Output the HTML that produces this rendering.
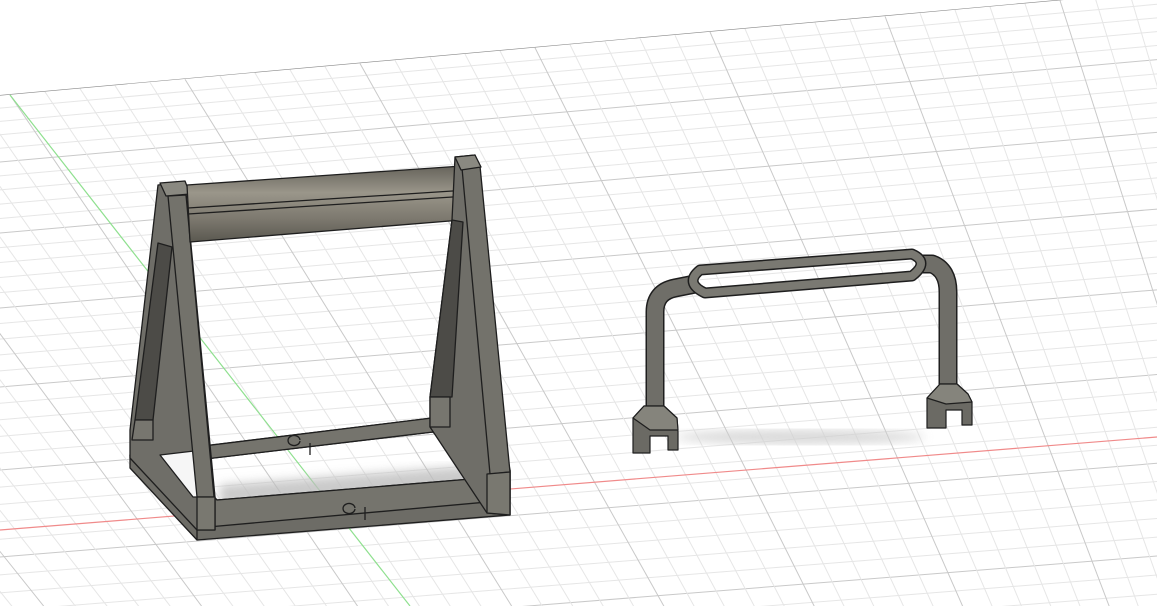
<!DOCTYPE html>
<html><head><meta charset="utf-8"><style>
html,body{margin:0;padding:0;background:#fff;width:1157px;height:606px;overflow:hidden}
svg{display:block;position:absolute;left:0;top:0}
</style></head><body>
<svg id="s" width="1157" height="606" viewBox="0 0 1157 606" xmlns="http://www.w3.org/2000/svg">
<defs>
<clipPath id="gc"><polygon points="0,95 1157,-9 1157,606 0,606"/></clipPath>
<linearGradient id="rod" x1="0" y1="0" x2="0" y2="1">
<stop offset="0" stop-color="#66635b"/><stop offset="0.35" stop-color="#9a968a"/><stop offset="0.7" stop-color="#7c786e"/><stop offset="1" stop-color="#5a5850"/></linearGradient>
<filter id="bl"><feGaussianBlur stdDeviation="5"/></filter>
</defs>
<g id="grid" clip-path="url(#gc)"></g>
<g clip-path="url(#gc)">
<line x1="10" y1="95" x2="410" y2="606" stroke="#8fe08f" stroke-width="1.2"/>
<line x1="0" y1="530" x2="1157" y2="437" stroke="#f08a8a" stroke-width="1.2"/>
<line x1="0" y1="95" x2="1157" y2="-9" stroke="#888" stroke-width="1.2"/>
</g>
<!-- shadows -->
<polygon points="220,485 480,465 482,492 220,505" fill="#bdbdbd" filter="url(#bl)" opacity="0.8"/>
<ellipse cx="800" cy="437" rx="125" ry="7" fill="#cfcfcf" filter="url(#bl)" opacity="0.8"/>

<g stroke="#1e1e1e" stroke-width="1.3" stroke-linejoin="round">
<!-- base -->
<path fill-rule="evenodd" d="M130,455 L432,418 L510,470 L510,515 L197,540 L130,468 Z M180,462 L433,432 L483,478 L217,500 Z" fill="#6d6c66"/>
<path fill-rule="evenodd" d="M130,455 L432,418 L510,470 L510,500 L197,528 Z M180,462 L433,432 L483,478 L217,500 Z" fill="#75746d"/>
<line x1="197" y1="528" x2="197" y2="540"/>
<line x1="310" y1="443" x2="310" y2="455"/>
<line x1="365" y1="507" x2="365" y2="520"/>
<path d="M300,440 a6,5 0 1 0 0,1" fill="none"/>
<path d="M355,508 a6,5 0 1 0 0,1" fill="none"/>
<!-- left side frame -->
<polygon points="158,185 185,182 215,497 215,530 197,530 130,458 130,430" fill="#6f6e68"/>
<polygon points="160,455 194,451 199,497 193,497" fill="#f6f6f6"/>
<polygon points="158,243 172,247 153,420 135,420" fill="#4c4b47"/>
<polygon points="135,420 153,420 153,440 132,440" fill="#77766f"/>
<polygon points="168,196 186,195 214,497 197,497" fill="#73726b"/>
<polygon points="160,183 185,181 190,194 166,196" fill="#8a8981"/>
<polygon points="197,497 215,497 215,530 197,530" fill="#797870"/>
<!-- rod -->
<polygon points="187,185 462,166 462,220 190,242" fill="url(#rod)"/>
<line x1="188" y1="208" x2="468" y2="190"/>
<line x1="188" y1="214" x2="468" y2="196"/>
<!-- right side frame -->
<polygon points="455,157 475,155 497,410 510,470 510,515 487,513 430,427 430,397 452,220" fill="#6f6e68"/>
<polygon points="452,220 463,222 452,397 430,397" fill="#4c4b47"/>
<polygon points="430,397 450,397 450,427 430,427" fill="#77766f"/>
<polygon points="462,168 480,166 510,472 490,474" fill="#73726b"/>
<polygon points="455,157 475,155 481,167 461,170" fill="#8a8981"/>
<polygon points="487,474 510,472 510,515 487,513" fill="#797870"/>
</g>

<!-- bracket -->
<g fill="none" stroke-linecap="butt" stroke-linejoin="round">
<path d="M655,420 L655,312 Q655,292 675,288 L695,284 M918,264 L932,264 Q948,270 948,292 L948,395" stroke="#1e1e1e" stroke-width="19"/>
<path d="M655,420 L655,312 Q655,292 675,288 L695,284 M918,264 L932,264 Q948,270 948,292 L948,395" stroke="#6f6e68" stroke-width="16"/>
<path d="M700,270 L912,254 Q930,262 912,276 L705,293 Q684,283 700,270 Z" stroke="#1e1e1e" stroke-width="11"/>
<path d="M700,270 L912,254 Q930,262 912,276 L705,293 Q684,283 700,270 Z" stroke="#7a7972" stroke-width="8"/>
</g>
<g stroke="#1e1e1e" stroke-width="1.2" stroke-linejoin="round">
<polygon points="644,406 664,406 677,418 678,432 678,450 668,450 668,436 650,436 650,453 633,453 633,418" fill="#6b6a64"/>
<polygon points="633,418 644,406 664,406 677,418 678,430 650,430" fill="#85847c"/>
<polygon points="940,384 957,384 968,394 972,402 972,425 962,425 962,410 946,410 946,428 927,428 927,398" fill="#6b6a64"/>
<polygon points="927,398 940,384 957,384 968,394 972,402 946,404" fill="#85847c"/>
</g>
</svg>
<script>
(function(){
var g=document.getElementById('grid'),h='';
for(var k=1;k<60;k++){var y0=95+k*13+k*k*0.08;var c=(k%5==0)?'#c9c9c9':'#e6e6e6';
h+='<line x1="0" y1="'+y0+'" x2="1157" y2="'+(y0-1157*(0.09-k*0.0003))+'" stroke="'+c+'" stroke-width="1"/>';}
for(var j=-40;j<45;j++){var x0=10+35*j,y0=95-0.09*35*j;var c=(j%5==0)?'#c9c9c9':'#e6e6e6';
var dx=0.68-j*0.012;var t=620;
h+='<line x1="'+x0+'" y1="'+y0+'" x2="'+(x0+dx*t)+'" y2="'+(y0+t)+'" stroke="'+c+'" stroke-width="1"/>';}
g.innerHTML=h;
})();
</script>
</body></html>
